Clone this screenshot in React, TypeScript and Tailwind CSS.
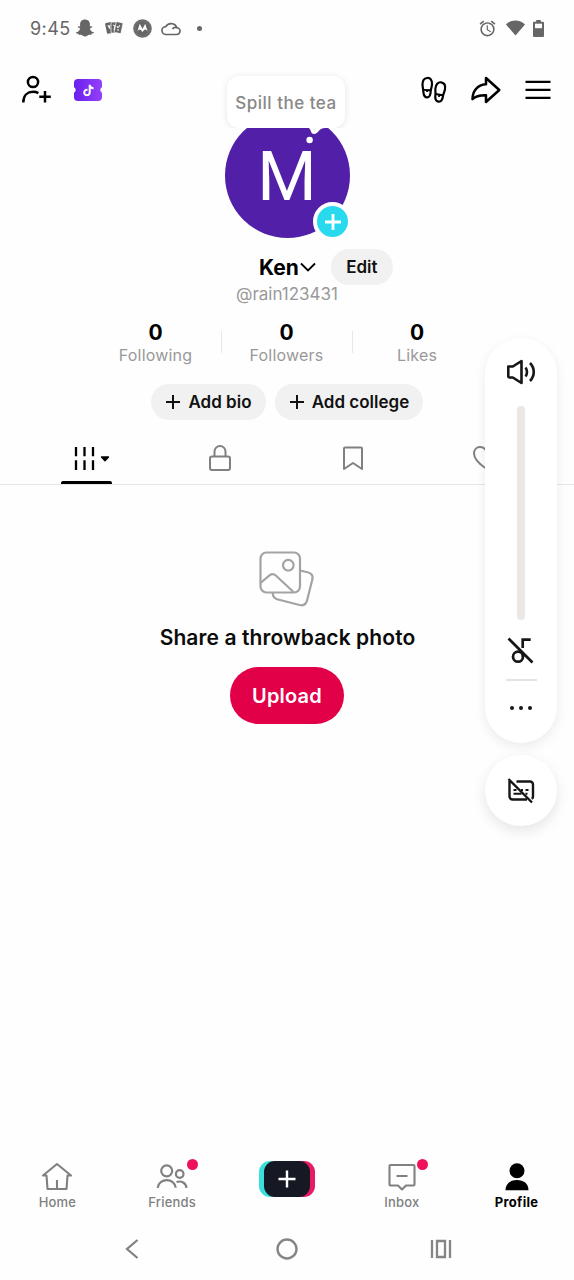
import React from 'react';
import { FaSnapchatGhost } from 'react-icons/fa';
import { FaTiktok } from 'react-icons/fa6';
import { MdAlarm } from 'react-icons/md';

const StatusBar = () => (
  <div className="h-14 flex items-center justify-between pl-[30px] pr-[30px] text-[#666]">
    <div className="flex items-center">
      <span className="w-[41px] text-[18px] leading-6 tracking-[0.4px] whitespace-nowrap pt-px">9:45</span>
      <FaSnapchatGhost className="w-[18px] h-[18px] ml-[5px]" />
      {/* Playing cards */}
      <svg className="w-[20px] h-[16px] ml-[10px]" viewBox="0 0 20 16">
        <g fill="#666">
          <rect x="2" y="2.5" width="7" height="11" rx="1" transform="rotate(-12 5 8)" />
          <rect x="7" y="2" width="7" height="11" rx="1" stroke="#fff" strokeWidth=".7" />
          <rect x="11" y="2" width="7" height="11" rx="1" stroke="#fff" strokeWidth=".7" transform="rotate(12 14 8)" />
        </g>
        <path d="M4 5l2 4M6 5l-1 3M9 5l2 1-1 4M13 6l1 2 2-3M14 9v2" stroke="#fff" strokeWidth="1" fill="none" />
      </svg>
      <svg className="w-[19px] h-[19px] ml-[9px]" viewBox="0 0 19 19">
        <circle cx="9.5" cy="9.5" r="9.3" fill="#666" />
        <circle cx="9.5" cy="9.5" r="7.7" fill="none" stroke="#888" strokeWidth=".5" />
        <path d="M4 13.2 6.8 4.8 9.5 10l2.7-5.2L15 13.2c-.7-1.8-1.6-2.8-2.6-2.8-1.2 0-1.7 1-2.9 2.5-1.2-1.5-1.7-2.5-2.9-2.5-1 0-1.9 1-2.6 2.8z" fill="#fff" />
      </svg>
      <svg className="w-[20px] h-[15px] ml-[9px]" viewBox="0 0 20 15" fill="none" stroke="#666" strokeWidth="1.7">
        <path d="M5 13.5h10.5a3.4 3.4 0 0 0 .3-6.8A6.1 6.1 0 0 0 4.700 5.700 3.900 3.900 0 0 0 5 13.500z" />
        <path d="M11.5 8.200c.8-1.500 2.400-2.100 4-1.500" />
      </svg>
      <span className="w-[5px] h-[5px] rounded-full bg-[#666] ml-[16px]" />
    </div>
    <div className="flex items-center">
      <MdAlarm className="w-[19px] h-[19px]" />
      <svg className="w-[19px] h-[16px] ml-[9px]" viewBox="0 0 19 16">
        <path d="M0 4.500C5-1 14-1 19 4.500L9.500 15.500z" fill="#666" />
      </svg>
      <svg className="w-[11px] h-[17px] ml-[8px]" viewBox="0 0 11 17">
        <path d="M3.200 0h4.600v1.800H10a1 1 0 0 1 1 1V16a1 1 0 0 1-1 1H1a1 1 0 0 1-1-1V2.800a1 1 0 0 1 1-1h2.200z" fill="#666" />
        <rect x="2" y="3.700" width="7" height="4.500" fill="#fff" />
      </svg>
    </div>
  </div>
);

const Header = () => (
  <div className="h-[57px] pt-[18px] flex items-start justify-between pl-[21px] pr-[23px]">
    <div className="flex items-center gap-[22px]">
      <svg className="w-[31px] h-8" viewBox="0 0 31 32" fill="none" stroke="#000" strokeWidth="2.500">
        <circle cx="12" cy="8" r="5.100" />
        <path d="M2.300 28.500c0-7.500 4.700-10.700 9.700-10.700 2.200 0 3.900.5 5.400 1.300M24 17v11.500M18.300 22.700h11.500" />
      </svg>
      <svg className="w-7 h-8" viewBox="0 0 28 32">
        <defs>
          <linearGradient id="ticket" x1="0" y1="0" x2="1" y2="0">
            <stop offset="0" stopColor="#6a20ee" />
            <stop offset="1" stopColor="#9440f8" />
          </linearGradient>
        </defs>
        <path d="M4 5h20a4 4 0 0 1 4 4v4.300a3 3 0 0 0 0 5.400v4.300a4 4 0 0 1-4 4H4a4 4 0 0 1-4-4v-4.300a3 3 0 0 0 0-5.400V9a4 4 0 0 1 4-4z" fill="url(#ticket)" />
        {/* Note inside the ticket */}
        <g transform="translate(8.500 10.500) scale(0.023)">
          <FaTiktok size={512} color="#fff" />
        </g>
      </svg>
    </div>
    <div className="flex items-center">
      {/* Footprints */}
      <svg className="w-[28px] h-8" viewBox="0 0 28 32" fill="none" stroke="#000" strokeWidth="2.200" strokeLinejoin="round">
        <path d="M7 4c3.300-.6 5.200 2.300 5 6.300-.1 2.400-1 4.200-1.200 6.200-.2 4.200-.6 6.700-3.300 6.900-3.200.2-3.900-2.400-4.100-5.500C3.200 14.800 2.500 13 2.500 10.300 2.500 6.800 3.900 4.500 7 4z" />
        <path d="M3.400 15.900l7.400.3M7.100 16v2" strokeWidth="1.900" />
        <path d="M21.200 8.300c3.200.6 4.400 3.500 3.800 7-.5 2.700-1.600 4.200-2 6.700-.5 3.700-1.800 6.100-4.800 5.600-2.900-.6-3.300-3.300-2.800-7 .3-2.200-.2-3.900 0-6.100.4-4 2.600-6.700 5.800-6.200z" />
        <path d="M15.400 20l7.700 1.300M19.200 20.800l-.3 2" strokeWidth="1.900" />
      </svg>
      <svg className="w-8 h-8 ml-[22px]" viewBox="0 0 32 32" fill="none" stroke="#000" strokeWidth="2.500" strokeLinejoin="round">
        <path d="M16 4 29.300 16 16 28v-6.800c-6.300-.2-10.400.8-13.500 4C2.500 17.400 7.200 10.600 16 10.300z" />
      </svg>
      <svg className="w-[26px] h-8 ml-[23px]" viewBox="0 0 26 32" stroke="#000" strokeWidth="2.300">
        <path d="M.5 7.800h25M.5 15.900h25M.5 23.900h25" />
      </svg>
    </div>
  </div>
);

const Avatar = () => (
  <div className="relative w-[125px] h-[125px] ml-[225px] rounded-full bg-[#511fa8] flex items-center justify-center">
    <span className="font-['Roboto',sans-serif] text-[68px] leading-none text-white pt-[3px] pr-px">M</span>
    {/* Tail of the thought bubble */}
    <svg className="absolute left-[78px] top-[14px] w-[26px] h-[20px]" viewBox="0 0 26 20" fill="#fff">
      <path d="M3 0c3 .5 4 1.500 4.800 4 .5 2 1.500 3 3.200 3 2 0 3.500-1.500 5-3.200C17.800 2 19 1 22 1V0z" />
      <circle cx="6.600" cy="13" r="3.200" />
    </svg>
    <div className="absolute left-[2px] top-[-37px] w-[118px] h-[52px] rounded-[12px] bg-white shadow-[0_1px_7px_rgba(0,0,0,0.1)] flex items-center justify-center pt-[3px] text-[17px] tracking-[0.5px] font-medium text-[#888] whitespace-nowrap [clip-path:inset(-10px_-10px_0_-10px)]">
      Spill the tea
    </div>
    <div className="absolute left-[88px] top-[89px] w-[39px] h-[39px] rounded-full border-4 border-white bg-[#29d9ee] flex items-center justify-center">
      <svg className="w-[18px] h-[18px]" viewBox="0 0 18 18" stroke="#fff" strokeWidth="2.800">
        <path d="M9 1v16M1 9h16" />
      </svg>
    </div>
  </div>
);

const stats = [
  { label: 'Following', width: 'w-[131px]' },
  { label: 'Followers', width: 'w-[131px]' },
  { label: 'Likes', width: 'w-[130px]' },
];

const Stats = () => (
  <div className="flex ml-[90px] mt-[16px] items-center h-[44px]">
    {stats.map((s, i) => (
      <React.Fragment key={s.label}>
        {i > 0 && <span className="w-px h-[22px] -mr-px -mt-[3px] bg-[#e8e8e8]" />}
        <div className={`${s.width} flex flex-col items-center`}>
          <span className="text-[21px] leading-[23px] font-bold text-black">0</span>
          <span className="text-[16px] leading-[21px] pt-px tracking-[0.2px] text-[#999]">{s.label}</span>
        </div>
      </React.Fragment>
    ))}
  </div>
);

const AddPill = ({ label, className }: { label: string; className: string }) => (
  <button className={`h-9 rounded-full bg-[#f1f1f1] flex items-center justify-center gap-2 text-[17px] font-semibold text-[#111] whitespace-nowrap ${className}`}>
    <svg className="w-[14px] h-[14px] shrink-0" viewBox="0 0 14 14" stroke="#111" strokeWidth="2">
      <path d="M7 0v14M0 7h14" />
    </svg>
    <span className="pt-px">{label}</span>
  </button>
);

const Tabs = () => (
  <div className="flex h-[65px] border-b border-[#e6e6e6] pl-[61px] text-[#808080]">
    <div className="w-[51px] h-[64px] pt-[27px] flex flex-col justify-between">
      <svg className="w-[36px] h-6 ml-[13px]" viewBox="0 0 36 24" stroke="#000" strokeWidth="2.300">
        <path d="M2 0v9.300M2 13.300v9.700M10.500 0v9.300M10.500 13.300v9.700M19 0v9.300M19 13.300v9.700" />
        <path d="M27.500 10h7l-3.500 3.800z" fill="#000" strokeWidth="1.400" strokeLinejoin="round" />
      </svg>
      <div className="h-[3px] rounded-t-xs bg-black" />
    </div>
    <svg className="w-6 h-7 ml-[96px] mt-[24px]" viewBox="0 0 24 28" fill="none" stroke="currentColor" strokeWidth="2">
      <rect x="2" y="12.500" width="20" height="13.500" rx="2" />
      <path d="M6.500 12.500V7.500a5.500 5.500 0 0 1 11 0v5" />
    </svg>
    <svg className="w-6 h-7 ml-[109px] mt-[24px]" viewBox="0 0 24 28" fill="none" stroke="currentColor" strokeWidth="2" strokeLinejoin="round">
      <path d="M4 3.500h16a1 1 0 0 1 1 1V25L12 19 3 25V4.500a1 1 0 0 1 1-1z" />
    </svg>
    <svg className="w-[28px] h-7 ml-[107px] mt-[24px]" viewBox="0 0 28 28" fill="none" stroke="currentColor" strokeWidth="2">
      <path d="M14 24.500C8 20.500 2 15.500 2 9.500 2 5.800 4.500 3 8 3c2.600 0 4.700 1.300 6 3.500C15.300 4.300 17.400 3 20 3c3.500 0 6 2.800 6 6.500 0 6-6 11-12 15z" />
    </svg>
  </div>
);

const EmptyState = () => (
  <div className="flex flex-col items-center pt-[65px]">
    <svg className="w-[56px] h-[58px]" viewBox="0 0 56 58" fill="none" stroke="#a3a3a3" strokeWidth="2.200">
      <rect x="1.500" y="2.500" width="39.500" height="40" rx="6" />
      <circle cx="29.300" cy="15.200" r="5.300" />
      <path d="M1.500 33 10.500 25.300c2.200-1.700 4.200-1.700 6.300.2L34.500 42M41 20.500l7.500 1.700c4 1 5.800 3.400 4.800 7.400l-5.200 20.700c-1.100 4.200-3.500 5.700-7.500 4.700L19 49.500c-3.500-.9-5.500-3.300-5.200-6.700" />
    </svg>
    <h2 className="mt-[16px] pl-px text-[21px] leading-[28px] tracking-[0.1px] font-semibold text-[#0b0b0b] whitespace-nowrap">Share a throwback photo</h2>
    <button className="mt-[15px] w-[114px] h-[57px] pt-px rounded-full bg-[#e20048] text-white text-[20px] tracking-[0.2px] font-semibold">Upload</button>
  </div>
);

const VolumePanel = () => (
  <div className="absolute left-[485px] top-[338px] w-[72px]">
    <div className="h-[405px] rounded-[36px] bg-white shadow-[0_4px_12px_rgba(0,0,0,0.08)] flex flex-col items-center">
      <svg className="w-[30px] h-[26px] mt-[21px]" viewBox="0 0 30 26" fill="none" stroke="#161616" strokeWidth="2.600">
        <path d="M2.300 7.500h4.500L15.500 2v22L6.800 18.500H3.500a1.200 1.200 0 0 1-1.200-1.200z" strokeLinejoin="round" />
        <path d="M19.500 8.500c2 2.500 2 6.500 0 9M24 4c5 5.300 5 12.700 0 18" />
      </svg>
      <div className="mt-[21px] w-2 h-[214px] rounded-full bg-[#ebe7e5]" />
      {/* Music off */}
      <svg className="w-[28px] h-[28px] mt-[16px] -ml-[3px]" viewBox="0 0 28 28" fill="none" stroke="#161616" strokeWidth="2.700">
        <path d="M2.500 2.500l24 24" />
        <circle cx="12" cy="20.700" r="5" />
        <path d="M16.700 12V3.700h8M17 17v4" />
      </svg>
      <div className="mt-[15px] w-[31px] h-[2px] bg-[#e4e4e4]" />
      <div className="mt-[25px] flex gap-[5px]">
        <span className="w-[4px] h-[4px] rounded-full bg-[#161616]" />
        <span className="w-[4px] h-[4px] rounded-full bg-[#161616]" />
        <span className="w-[4px] h-[4px] rounded-full bg-[#161616]" />
      </div>
    </div>
    <div className="mt-3 h-[71px] rounded-full bg-white shadow-[0_5px_14px_rgba(0,0,0,0.1)] flex items-center justify-center">
      {/* Captions off */}
      <svg className="w-[28px] h-[26px]" viewBox="0 0 28 26" fill="none" stroke="#161616" strokeWidth="2.400">
        <path d="M9.500 3.500H23a3 3 0 0 1 3 3v12a3 3 0 0 1-1.200 2.400M2.500 3v15.500a3 3 0 0 0 3 3H20M1.500 1l23.500 23.500" />
        <path d="M6.500 12h3M14 12h2M18.500 12h3M6.500 15.800h8M18.500 15.800h2" strokeWidth="1.900" />
      </svg>
    </div>
  </div>
);

const NavItem = ({ label, active, badge, children }: { label: string; active?: boolean; badge?: boolean; children: React.ReactNode }) => (
  <div className={`w-[114.800px] flex flex-col items-center ${active ? 'text-black' : 'text-[#808080]'}`}>
    <div className="relative h-[32px] flex items-center">
      {children}
      {badge && <span className="absolute right-[-10px] top-[-2px] w-[11px] h-[11px] rounded-full bg-[#ed1259]" />}
    </div>
    <span className={`text-[13px] leading-[18px] ${active ? 'font-bold tracking-[0.3px]' : 'font-medium tracking-[0.2px]'}`}>{label}</span>
  </div>
);

const BottomNav = () => (
  <div className="h-[67px] flex">
    <NavItem label="Home">
      <svg className="w-8 h-8" viewBox="0 0 32 32" fill="none" stroke="currentColor" strokeWidth="2.100" strokeLinejoin="round">
        <path d="M2 14.500 16 3l14 11.500h-3.500L25.500 28h-19L5.500 14.500zM16 19V28" />
      </svg>
    </NavItem>
    <NavItem label="Friends" badge>
      <svg className="w-8 h-8" viewBox="0 0 32 32" fill="none" stroke="currentColor" strokeWidth="2.200">
        <circle cx="10.700" cy="9.800" r="5.500" />
        <circle cx="23.700" cy="13" r="3.800" />
        <path d="M1.700 26.800c.8-10.300 17.300-10.300 18 0M20.500 21c4.700-1.500 9.500.8 10 5.800" />
      </svg>
    </NavItem>
    <div className="w-[114.800px] flex justify-center">
      <div className="w-[56px] h-[36px] rounded-[11px] bg-[linear-gradient(90deg,#3be0dc_50%,#e61b62_50%)] flex justify-center">
        <div className="w-[46px] h-[36px] rounded-[11px] bg-[#161823] flex items-center justify-center">
          <svg className="w-[18px] h-[18px]" viewBox="0 0 18 18" stroke="#fff" strokeWidth="2.400">
            <path d="M9 .5v17M.5 9h17" />
          </svg>
        </div>
      </div>
    </div>
    <NavItem label="Inbox" badge>
      <svg className="w-8 h-8" viewBox="0 0 32 32" fill="none" stroke="currentColor" strokeWidth="2.100" strokeLinejoin="round">
        <path d="M4.500 4h23a1 1 0 0 1 1 1V23.500a1 1 0 0 1-1 1H20l-4 4-4-4H4.500a1 1 0 0 1-1-1V5a1 1 0 0 1 1-1zM10.500 15h11" />
      </svg>
    </NavItem>
    <NavItem label="Profile" active>
      <svg className="w-8 h-8" viewBox="0 0 32 32" fill="currentColor">
        <circle cx="16" cy="9.700" r="7.500" />
        <path d="M4.500 29.300c0-6.800 5-10.300 11.500-10.300s11.500 3.500 11.500 10.300z" />
      </svg>
    </NavItem>
  </div>
);

const SystemNav = () => (
  <div className="h-[52px] flex items-center pt-[10px] pb-[20px] pl-[124px]">
    <svg className="w-[15px] h-[22px]" viewBox="0 0 15 22" fill="none" stroke="#808080" strokeWidth="2.200">
      <path d="M13.500 2 3 11l10.500 9" />
    </svg>
    <svg className="w-[22px] h-[22px] ml-[137px]" viewBox="0 0 22 22" fill="none" stroke="#858585" strokeWidth="2.400">
      <circle cx="11" cy="11" r="9.500" />
    </svg>
    <svg className="w-[22px] h-[20px] ml-[132px]" viewBox="0 0 22 20" fill="none" stroke="#858585" strokeWidth="2.300">
      <path d="M2 1v18M20 1v18M7 2h8v16H7z" />
    </svg>
  </div>
);

const App: React.FC = () => {
  return (
    <div className="relative w-[574px] h-[1280px] overflow-hidden bg-[#fefefe] flex flex-col font-['Inter','Liberation_Sans',sans-serif]">
      <StatusBar />
      <Header />
      <Avatar />

      <div className="flex items-center mt-[11px] h-9 pl-[259px]">
        <span className="text-[21px] leading-7 font-bold text-black pt-px">Ken</span>
        <svg className="w-4 h-[10px] ml-[1px]" viewBox="0 0 16 10" fill="none" stroke="#000" strokeWidth="1.800">
          <path d="M1 1.500l7 7 7-7" />
        </svg>
        <button className="ml-[15px] w-[62px] h-9 pt-[2px] rounded-full bg-[#f1f1f1] text-[17px] font-semibold text-[#111]">Edit</button>
      </div>
      <div className="-mt-px mb-px text-[17px] leading-5 text-[#999] text-center">@rain123431</div>

      <Stats />

      <div className="flex gap-[9px] mt-[19px] pl-[151px]">
        <AddPill label="Add bio" className="w-[115px] pl-px" />
        <AddPill label="Add college" className="w-[148px] pl-px" />
      </div>

      <Tabs />
      <EmptyState />

      <div className="mt-auto">
        <BottomNav />
        <SystemNav />
      </div>

      <VolumePanel />
    </div>
  );
};

export default App;
